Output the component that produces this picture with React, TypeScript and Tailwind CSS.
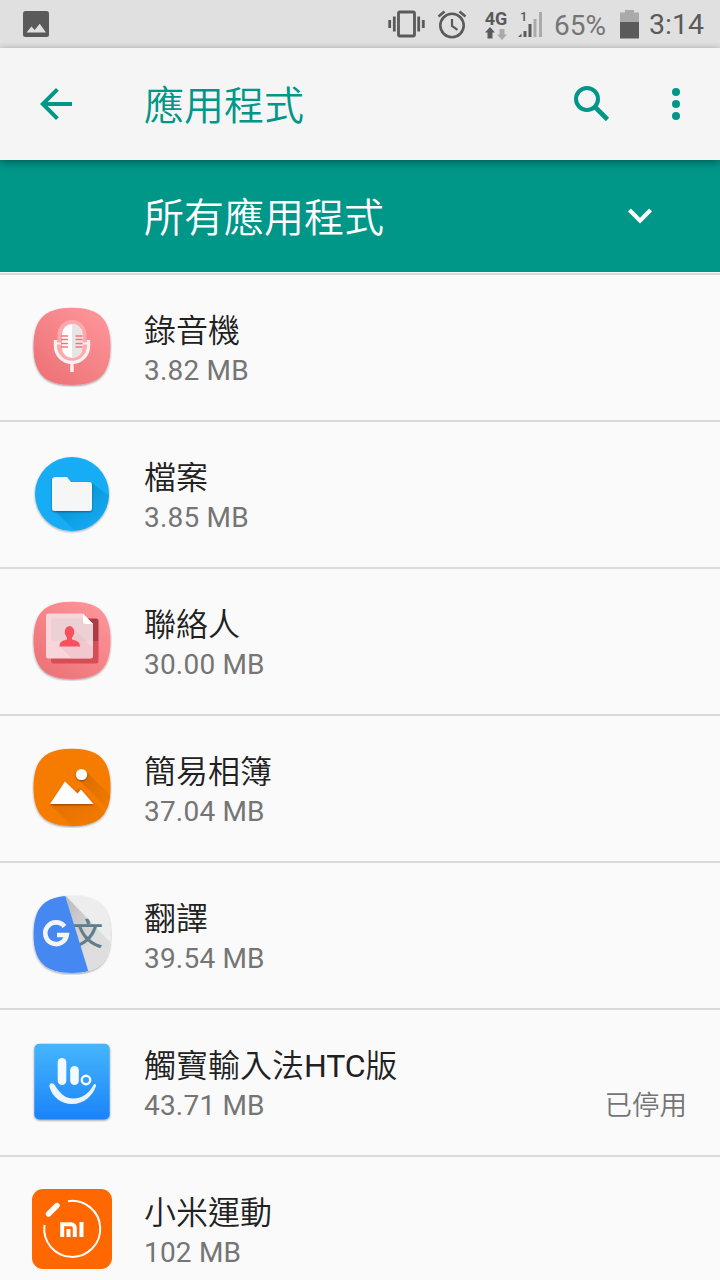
import type { ReactNode } from 'react';

const SQUIRCLE = 'M40 .8C67 .8 78.5 12 78.5 39.5S67 78 40 78 1.5 67 1.5 39.5 13 .8 40 .8Z';

type AppEntry = { name: string; size: string; icon: ReactNode; status?: string };

const apps: AppEntry[] = [
  { name: '錄音機', size: '3.82 MB', icon: <RecorderIcon /> },
  { name: '檔案', size: '3.85 MB', icon: <FilesIcon /> },
  { name: '聯絡人', size: '30.00 MB', icon: <ContactsIcon /> },
  { name: '簡易相簿', size: '37.04 MB', icon: <GalleryIcon /> },
  { name: '翻譯', size: '39.54 MB', icon: <TranslateIcon /> },
  { name: '觸寶輸入法HTC版', size: '43.71 MB', icon: <KeyboardIcon />, status: '已停用' },
  { name: '小米運動', size: '102 MB', icon: <MiFitIcon /> },
];

export default function App() {
  return (
    <div className="flex h-[1280px] w-[720px] flex-col overflow-hidden bg-[#fafafa] font-[Roboto,'Noto_Sans_CJK_TC',sans-serif]">
      <StatusBar />

      {/* Toolbar */}
      <header className="relative z-10 flex h-28 shrink-0 items-center bg-[#f5f5f5] shadow-[0_2px_8px_rgba(0,0,0,0.4)]">
        <button className="ml-8 h-12 w-12" aria-label="back">
          <svg viewBox="0 0 24 24" className="h-12 w-12 fill-[#009688]">
            <path d="M20 11H7.83l5.59-5.59L12 4l-8 8 8 8 1.41-1.41L7.83 13H20v-2z" />
          </svg>
        </button>
        <h1 className="ml-16 flex-1 pt-1.5 text-[40px] leading-none font-[350] text-[#009688]">應用程式</h1>
        <button className="mr-9 h-12 w-12" aria-label="search">
          <svg viewBox="0 0 48 48" className="h-12 w-12 fill-none stroke-[#009688]">
            <circle cx="19" cy="19" r="11" strokeWidth="4" />
            <path d="M27 27L39.5 39.5" strokeWidth="4.6" />
          </svg>
        </button>
        <button className="mr-5 h-12 w-12" aria-label="more">
          <svg viewBox="0 0 24 24" className="h-12 w-12 fill-[#009688]">
            <circle cx="12" cy="6" r="2" />
            <circle cx="12" cy="12" r="2" />
            <circle cx="12" cy="18" r="2" />
          </svg>
        </button>
      </header>

      {/* Filter */}
      <div className="flex h-28 shrink-0 items-center justify-between bg-[#009688] pr-14 pl-36 text-white">
        <span className="pt-1.5 text-[40px] leading-none font-[350]">所有應用程式</span>
        <svg viewBox="0 0 24 24" className="h-12 w-12 fill-white">
          <path d="M7.41 8.29L12 12.87l4.59-4.58L18 9.7l-6 6-6-6z" />
        </svg>
      </div>

      <ul className="mt-px">
        {apps.map((app) => (
          <AppRow key={app.name} {...app} />
        ))}
      </ul>
    </div>
  );
}

function AppRow({ name, size, icon, status }: AppEntry) {
  return (
    <li className="flex h-[147px] border-t-2 border-[#dadada] pt-8 pr-[33px] pl-8">
      <div className="h-20 w-20 shrink-0">{icon}</div>
      <div className="ml-8 flex-1 pt-px">
        <p className="text-[32px] leading-[46px] font-[350] text-[#212121]">
          {name.split(/([A-Z]+)/).map((part, i) => (
            <span key={i} className={i % 2 ? 'font-normal tracking-[-0.2px]' : ''}>{part}</span>
          ))}
        </p>
        <p className="text-[28px] leading-[34px] tracking-[0.2px] text-[#757575]">{size}</p>
      </div>
      {status && <span className="mt-[47px] text-[27.5px] leading-[34px] font-[350] text-[#757575]">{status}</span>}
    </li>
  );
}

function StatusBar() {
  return (
    <div className="flex h-12 shrink-0 items-center bg-[#e0e0e0] text-[#5a5a5a]">
      <svg viewBox="0 0 26 26" className="ml-[23px] h-[26px] w-[26px]">
        <rect width="26" height="26" rx="2.5" fill="#5a5a5a" />
        <path d="M3.5 21.5l5-6 3.2 3.5 5-6.2 6.3 8.7z" fill="#e0e0e0" />
      </svg>
      <div className="flex-1" />
      {/* Vibrate */}
      <svg viewBox="0 0 38 30" className="h-[30px] w-[38px]" fill="none" stroke="currentColor" strokeWidth="2.8">
        <rect x="10.5" y="3" width="16" height="24" rx="1.5" />
        <path d="M6.3 7.5v15M1.7 11v8M30.7 7.5v15M35.3 11v8" />
      </svg>
      {/* Alarm */}
      <svg viewBox="0 0 30 30" className="ml-[11px] h-[30px] w-[30px]" fill="none" stroke="currentColor" strokeWidth="2.6">
        <circle cx="15" cy="16.5" r="11.7" />
        <path d="M1.5 7.5l6-5M28.5 7.5l-6-5" />
        <path d="M15 10v7l5.5 3.8" strokeWidth="2.2" />
      </svg>
      {/* Network */}
      <div className="ml-[17px] flex w-6 flex-col items-center pt-1">
        <span className="h-[14px] text-[18px] leading-[14px] font-bold">4G</span>
        <svg viewBox="0 0 24 13" className="mt-px h-[13px] w-6">
          <path d="M6 0l5 5.500H8.500V11.500h-5V5.500H1z" fill="currentColor" />
          <path d="M18 13l5-5.500h-2.500V2h-5v5.500H13z" fill="#aaa" />
        </svg>
      </div>
      <div className="relative ml-[10px] h-[27px] w-[25px]">
        <span className="absolute top-0 left-0.5 text-[13px] leading-3 font-medium">1</span>
        <svg viewBox="0 0 25 27" className="h-[27px] w-[25px]">
          <path d="M0 26l3.5-3.5V26zM5.500 20h3v6h-3zM10.500 13h3v13h-3z" fill="currentColor" />
          <path d="M15.500 8h3v18h-3zM21 1h3v25h-3z" fill="#aaa" />
        </svg>
      </div>
      <span className="ml-[11px] w-[53px] pt-[3px] text-[28px] leading-none text-[#757575]">65%</span>
      <svg viewBox="0 0 19 30" className="ml-[13px] h-[30px] w-[19px]">
        <path d="M5 1h9v2.500h5V13H0V3.500h5z" fill="#aaa" />
        <path d="M0 13h19v16.500H0z" fill="#5a5a5a" />
      </svg>
      <span className="mr-4 ml-[10px] pt-[3px] text-[28.5px] leading-none">3:14</span>
    </div>
  );
}

function IconShadow() {
  return (
    <filter id="lift" x="-10%" y="-10%" width="120%" height="120%">
      <feDropShadow dx="0" dy="1" stdDeviation="0.8" floodOpacity="0.4" />
    </filter>
  );
}

function RecorderIcon() {
  return (
    <svg viewBox="0 0 80 80" className="h-20 w-20">
      <defs>
        <IconShadow />
        <linearGradient id="rose" x1="1" y1="0" x2="0.2" y2="1">
          <stop stopColor="#ff989d" />
          <stop offset="1" stopColor="#ed7276" />
        </linearGradient>
      </defs>
      <path d={SQUIRCLE} fill="url(#rose)" filter="url(#lift)" />
      <rect x="25.5" y="13" width="29" height="42" rx="14.5" fill="#ffa9ad" />
      <rect x="30" y="17" width="20.5" height="34" rx="10.25" fill="#fff" />
      <path d="M40 17a10.25 10.25 0 0 1 10.5 10.25v13.5A10.25 10.25 0 0 1 40 51z" fill="#e8e5e5" />
      <path d="M29 29h7M29 32.5h7M29 36.5h7M29 40h7M43.5 29h7M43.5 32.5h7M43.5 36.5h7M43.5 40h7" stroke="#f2757b" strokeWidth="1.6" />
      <path d="M23.5 33v6a16.5 16.5 0 0 0 33 0v-6M40 56v9" fill="none" stroke="#f5f2f2" strokeWidth="3.4" />
      <path d="M24 36.5h5M51 36.5h5" stroke="#f5f2f2" strokeWidth="2" />
    </svg>
  );
}

function FilesIcon() {
  return (
    <svg viewBox="0 0 80 80" className="h-20 w-20">
      <defs>
        <clipPath id="filesClip"><circle cx="40" cy="40" r="37" /></clipPath>
        <linearGradient id="filesShade" x1="0.2" y1="0.2" x2="0.8" y2="0.9">
          <stop stopColor="#0788c9" />
          <stop offset="1" stopColor="#13adf5" />
        </linearGradient>
      </defs>
      <circle cx="40" cy="40" r="37" fill="#13adf5" filter="url(#lift)" />
      <path d="M21 55L46 80H80V44L60 29z" fill="url(#filesShade)" opacity="0.75" clipPath="url(#filesClip)" />
      <path d="M23.5 23H35l4 5h18a3 3 0 0 1 3 3v23a3 3 0 0 1-3 3H23a3 3 0 0 1-3-3V26.5a3.5 3.5 0 0 1 3.5-3.5z" fill="#f6f6f6" filter="url(#lift)" />
    </svg>
  );
}

function ContactsIcon() {
  return (
    <svg viewBox="0 0 80 80" className="h-20 w-20">
      <path d={SQUIRCLE} fill="url(#rose)" filter="url(#lift)" />
      <path d="M19 17.5h45a2.5 2.5 0 0 1 2.5 2.5v20H19z" fill="#a93c46" />
      <path d="M19 40h47.5v20a2.5 2.5 0 0 1-2.5 2.5H21.5A2.5 2.5 0 0 1 19 60z" fill="#d64d58" />
      <path d="M16.5 12.5h34l10.5 10.5v32a2.5 2.5 0 0 1-2.5 2.5h-42a2.5 2.5 0 0 1-2.5-2.5V15a2.5 2.5 0 0 1 2.5-2.5z" fill="#f8d5d8" />
      <path d="M21 17.5h30l10 5.5v17H19V19.5a2 2 0 0 1 2-2z" fill="#ecd0d4" />
      <path d="M41 27l20 20v8a2.5 2.5 0 0 1-2.5 2.5H40L27.5 45.5z" fill="#e9bcc2" opacity="0.5" />
      <path d="M51 12.5L61 23h-7.5a2.5 2.5 0 0 1-2.5-2.5z" fill="#fff" />
      <ellipse cx="37.5" cy="31" rx="4.8" ry="6" fill="#f9505f" />
      <path d="M35 34h5v4.5c5 1 8 2.5 8 7H27.5c0-4.5 2.5-6 7.5-7z" fill="#f9505f" />
    </svg>
  );
}

function GalleryIcon() {
  return (
    <svg viewBox="0 0 80 80" className="h-20 w-20">
      <defs>
        <clipPath id="galleryClip"><path d={SQUIRCLE} /></clipPath>
        <linearGradient id="galleryShade" x1="0" y1="0" x2="0.8" y2="0.8">
          <stop stopColor="#d96a00" />
          <stop offset="1" stopColor="#f07900" />
        </linearGradient>
      </defs>
      <path d={SQUIRCLE} fill="#f57c00" filter="url(#lift)" />
      <g clipPath="url(#galleryClip)" fill="url(#galleryShade)">
        <path d="M45.5 30.5L53.5 22.5 82 51v16z" />
        <path d="M18 56L48 40 82 74v6H42z" opacity="0.8" />
      </g>
      <g fill="#fff" filter="url(#lift)">
        <circle cx="49.5" cy="26.5" r="5.6" />
        <path d="M18 56l15-22.5 12.5 12 3.5-4L61.5 56z" />
      </g>
    </svg>
  );
}

function TranslateIcon() {
  return (
    <svg viewBox="0 0 80 80" className="h-20 w-20">
      <defs>
        <clipPath id="translateClip"><path d={SQUIRCLE} /></clipPath>
        <linearGradient id="fold" x1="0" y1="0" x2="1" y2="1">
          <stop stopColor="#b9b9b9" />
          <stop offset="0.6" stopColor="#dedede" />
        </linearGradient>
      </defs>
      <path d={SQUIRCLE} fill="#ededed" filter="url(#lift)" />
      <g clipPath="url(#translateClip)">
        <path d="M33 0L80 49V80H57z" fill="url(#fold)" />
        <text x="40" y="50" fontSize="31" fontWeight="500" fill="#607d8b" className="font-['Noto_Sans_CJK_TC',sans-serif]">文</text>
        <path d="M0 0h33l24.5 80H0z" fill="#4688f2" />
        <path d="M32.5 31.5a10.8 10.8 0 1 0 2.200 8.500H25" fill="none" stroke="#f5f5f5" strokeWidth="4.6" />
      </g>
    </svg>
  );
}

function KeyboardIcon() {
  return (
    <svg viewBox="0 0 80 80" className="h-20 w-20">
      <defs>
        <linearGradient id="sky" x1="0" y1="0" x2="0" y2="1">
          <stop stopColor="#45b6fc" />
          <stop offset="1" stopColor="#1b83f9" />
        </linearGradient>
      </defs>
      <rect x="2.3" y="1.7" width="75.4" height="75.8" rx="5" fill="url(#sky)" filter="url(#lift)" />
      <rect x="25.7" y="16" width="8.6" height="27" rx="4.3" fill="#f4faff" />
      <rect x="38.2" y="24" width="8.6" height="19" rx="4.3" fill="#f4faff" />
      <circle cx="54" cy="38" r="4.2" fill="none" stroke="#f4faff" strokeWidth="2.4" />
      <path d="M17.5 45c-1-4 3.500-5 5.500-1.500 5 8.500 11 13 18 13 10 0 16.500-6 20.500-13.500 1-2 3-1 2.500 1-3.500 10-12 18-24 18C29 62 20.500 55 17.500 45z" fill="#eaf5ff" />
    </svg>
  );
}

function MiFitIcon() {
  return (
    <svg viewBox="0 0 80 80" className="h-20 w-20" fill="none" stroke="#fff">
      <rect width="80" height="80" rx="11" fill="#ff6700" stroke="none" />
      <path d="M36 12.2A28 28 0 1 1 12.5 36" strokeWidth="2" />
      <path d="M16.5 25l8.5-8.5" strokeWidth="5.4" strokeLinecap="round" />
      <path d="M30.2 48V35.2H39a3.8 3.8 0 0 1 3.8 3.8V48M36.5 40v8M49.5 33v15" strokeWidth="4" />
    </svg>
  );
}
